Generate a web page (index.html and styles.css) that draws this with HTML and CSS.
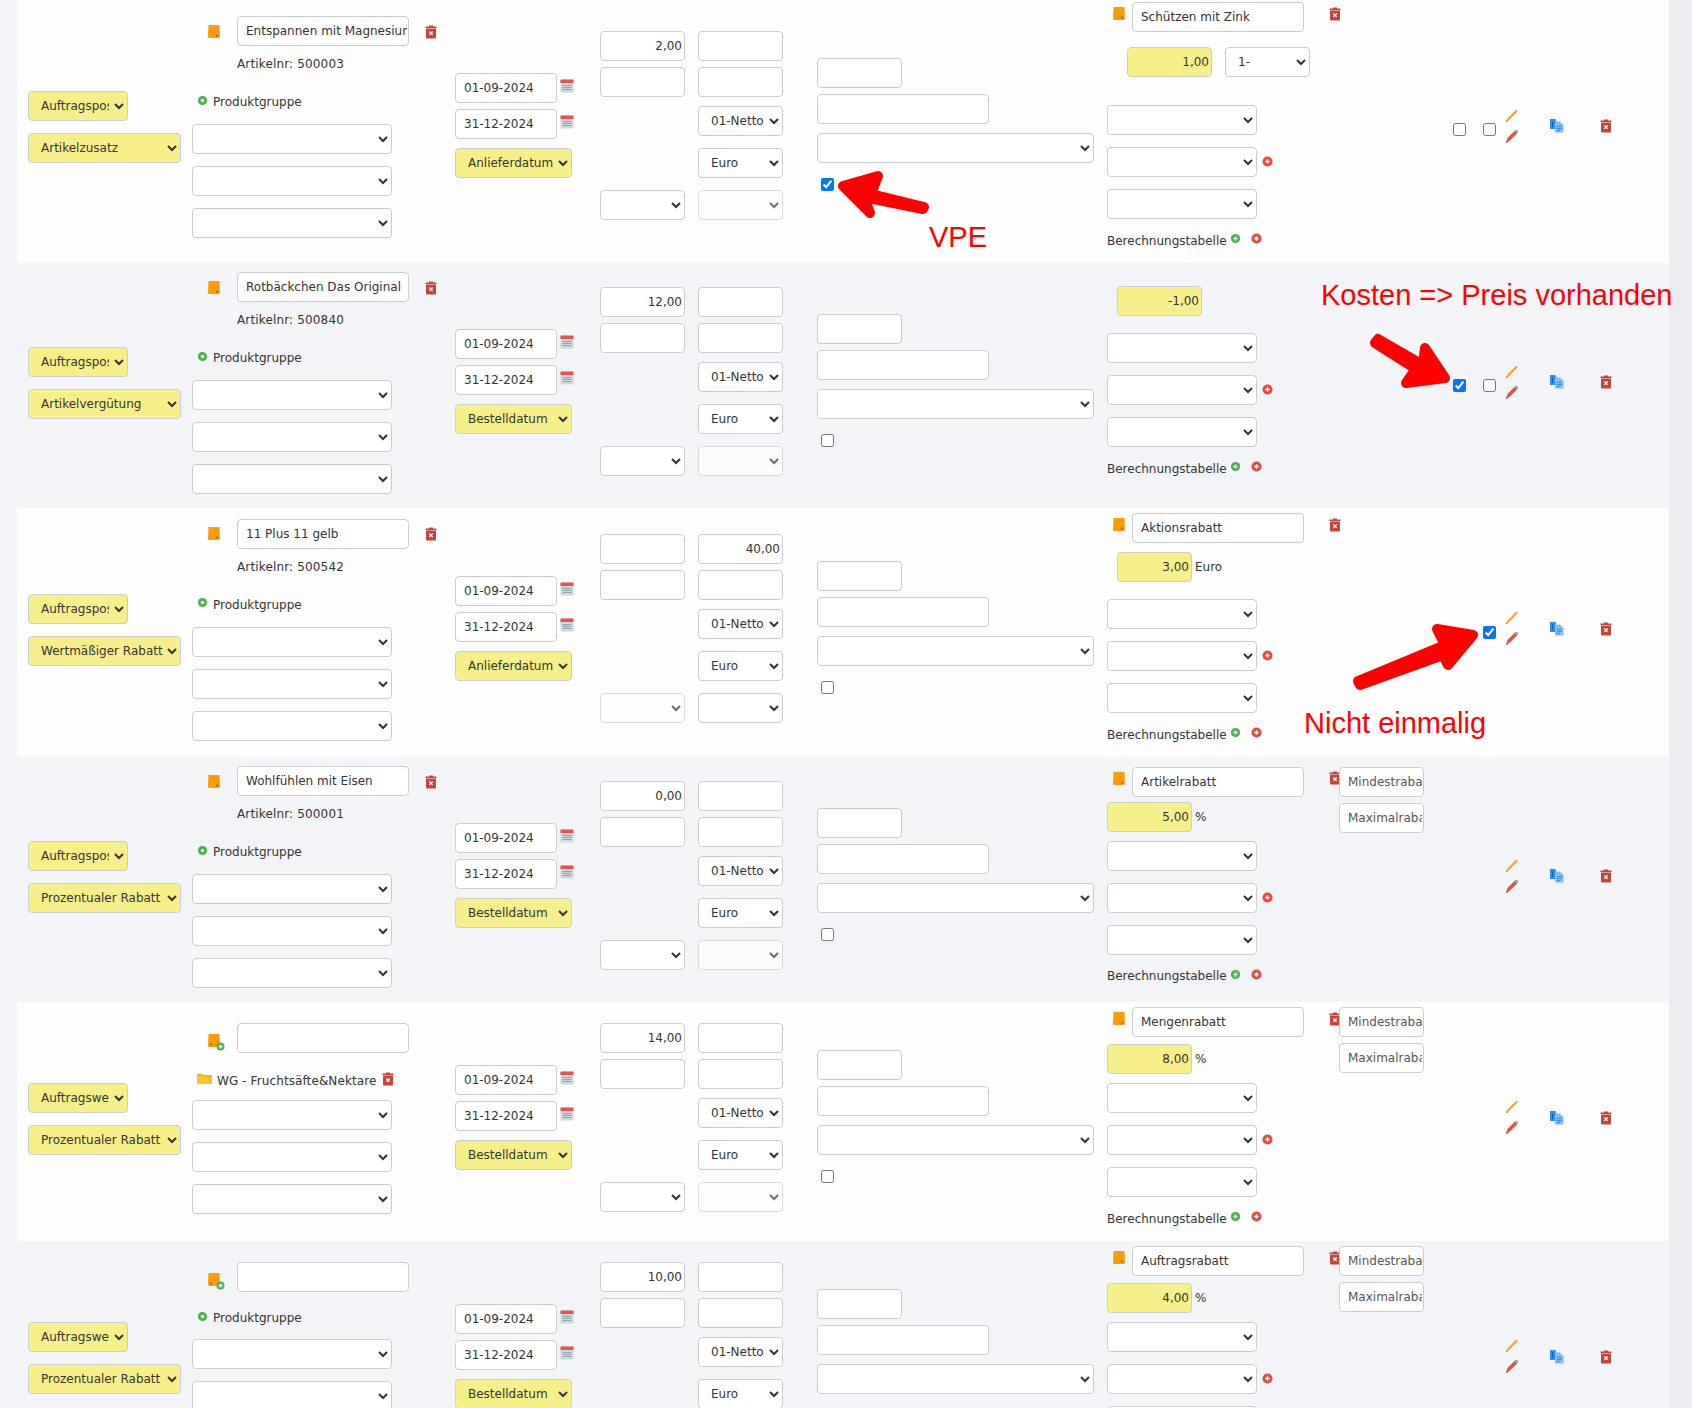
FILE: index.html
```html
<!DOCTYPE html>
<html lang="de">
<head>
    <meta charset="UTF-8">
    <title>Konditionen</title>
    <link rel="stylesheet" href="styles.css">
</head>
<body>

    <!-- Icon set -->
    <svg class="sprites" width="0" height="0">
        <symbol id="i-box" viewBox="0 0 14 15"><path d="M1.5 1h11l.5 11.5q0 1.500-1.500 1.500h-9q-1.500 0-1.500-1.500z" fill="#ff9a0a"/><rect x="9" y="10.500" width="2" height="2" fill="#a86a10"/></symbol>
        <symbol id="i-box-add" viewBox="0 0 18 18"><path d="M1.500 1h11l.5 11.500q0 1.500-1.500 1.500h-9q-1.500 0-1.500-1.500z" fill="#ff9a0a"/><rect x="3" y="10.500" width="2" height="2" fill="#a86a10"/><circle cx="13.500" cy="13.500" r="4" fill="#4caf50"/><path d="M13.500 11.500v4M11.500 13.500h4" stroke="#fff" stroke-width="1.300"/></symbol>
        <symbol id="i-trash" viewBox="0 0 12 15"><path d="M4 1.500h4v1h3.500v1.500h-11v-1.500h3.500z" fill="#c8423c"/><path d="M1 4.500h10v9q0 1-1 1h-8q-1 0-1-1z" fill="#c8423c"/><path d="M4.300 7.500l3.400 3.400M7.700 7.500l-3.400 3.400" stroke="#fff" stroke-width="1.300"/></symbol>
        <symbol id="i-cal" viewBox="0 0 14 15"><rect x=".5" y="1.500" width="13" height="13" rx="1" fill="#cfd8dc"/><path d="M.5 5v-2.500q0-1 1-1h11q1 0 1 1v2.500z" fill="#e5534b"/><path d="M2.500 7.500h9M2.500 9.500h9M2.500 11.500h9" stroke="#90a4ae"/></symbol>
        <symbol id="i-green" viewBox="0 0 12 12"><circle cx="6" cy="6" r="5" fill="#4caf50"/><circle cx="6" cy="6" r="2" fill="#dff0df"/></symbol>
        <symbol id="i-green-plus" viewBox="0 0 12 12"><circle cx="6" cy="6" r="5" fill="#4caf50"/><path d="M6 3.500v5M3.500 6h5" stroke="#dff0df" stroke-width="1.500"/></symbol>
        <symbol id="i-red-plus" viewBox="0 0 12 12"><circle cx="6" cy="6" r="5.500" fill="#e8483f"/><path d="M6 3.500v5M3.500 6h5" stroke="#fff" stroke-width="1.500"/></symbol>
        <symbol id="i-pencil" viewBox="0 0 14 15"><path d="M1 14l1.500-3.500 8.500-8.500 1.500 1.500-8.500 8.500z" fill="#ff9f1c"/><path d="M11 2l1.500 1.500" stroke="#e8a0a0" stroke-width="1.500"/><path d="M1 14l.8-2 1.200 1.200z" fill="#8a6a3a"/></symbol>
        <symbol id="i-pen-red" viewBox="0 0 14 15"><path d="M1 14l1.500-5 7-7q2-1.500 3-.5t-.5 3l-7 7z" fill="#e2533f"/><path d="M9.500 2q2-1.500 3-.5t-.5 3z" fill="#a9a9a9"/><path d="M1 14l.8-2.500 1.700 1.700z" fill="#777"/></symbol>
        <symbol id="i-copy" viewBox="0 0 14 15"><path d="M0 1h5l1 1v9h-6z" fill="#2f8df0"/><path d="M5 3.500h5l3.500 3.500v7.500h-8.500z" fill="#7cc0fb"/><path d="M7 8.500h5M7 10.500h5M7 12.500h3" stroke="#2f8df0"/><path d="M2.500 3v6" stroke="#0d5fb8"/></symbol>
        <symbol id="i-folder" viewBox="0 0 15 11"><path d="M0 1.500q0-1 1-1h4l1.500 1.500h7.500q1 0 1 1v7q0 1-1 1h-13q-1 0-1-1z" fill="#ffc12e"/><path d="M0 2.500h6.500l1 1h7.500" stroke="#f59f0a" fill="none"/></symbol>
    </svg>

    <div class="list">

        <!-- Row 1 -->
        <div class="row row-tall row-first">
            <div class="col c-type">
                <select class="yellow w-pos"><option>Auftragsposition</option></select>
                <select class="yellow w-kind"><option>Artikelzusatz</option></select>
            </div>
            <div class="col c-art">
                <div class="art-head">
                    <svg class="ic-box"><use href="#i-box"/></svg>
                    <input class="w-name" type="text" value="Entspannen mit Magnesium">
                    <svg class="ic-trash art-trash"><use href="#i-trash"/></svg>
                </div>
                <div class="art-no">Artikelnr: 500003</div>
                <div class="group"><svg class="ic-dot"><use href="#i-green"/></svg>Produktgruppe</div>
                <select class="w-group"><option></option></select>
                <select class="w-group"><option></option></select>
                <select class="w-group"><option></option></select>
            </div>
            <div class="col c-date">
                <div class="date-line"><input class="w-date" type="text" value="01-09-2024"><svg class="ic-cal"><use href="#i-cal"/></svg></div>
                <div class="date-line"><input class="w-date" type="text" value="31-12-2024"><svg class="ic-cal"><use href="#i-cal"/></svg></div>
                <select class="yellow w-when"><option>Anlieferdatum</option></select>
            </div>
            <div class="col c-num">
                <input class="w-num num" type="text" value="2,00">
                <input class="w-num num" type="text">
                <div class="num-gap"></div>
                <select class="w-num"><option></option></select>
            </div>
            <div class="col c-num2">
                <input class="w-num num" type="text">
                <input class="w-num num" type="text">
                <select class="w-num"><option>01-Netto</option></select>
                <select class="w-num"><option>Euro</option></select>
                <select class="w-num" disabled><option></option></select>
            </div>
            <div class="col c-extra">
                <input class="w-num" type="text">
                <input class="w-name" type="text">
                <select class="w-wide"><option></option></select>
                <input class="check-vpe" type="checkbox" checked>
            </div>
            <div class="col c-calc">
                <div class="calc-main">
                    <div class="calc-head">
                        <svg class="ic-box"><use href="#i-box"/></svg>
                        <input class="w-name" type="text" value="Schützen mit Zink">
                        <svg class="ic-trash calc-trash"><use href="#i-trash"/></svg>
                    </div>
                    <div class="value-line value-1 sp-15">
                        <input class="w-num num yellow" type="text" value="1,00">
                        <select class="w-num"><option>1-</option></select>
                    </div>
                    <div class="calc-selects sp-28">
                        <select class="w-calc"><option></option></select>
                        <div class="sel-add"><select class="w-calc"><option></option></select><svg class="ic-dot"><use href="#i-red-plus"/></svg></div>
                        <select class="w-calc"><option></option></select>
                    </div>
                    <div class="calc-label">Berechnungstabelle<svg class="ic-dot"><use href="#i-green-plus"/></svg><svg class="ic-dot"><use href="#i-red-plus"/></svg></div>
                </div>
            </div>
            <div class="col c-act">
                <input type="checkbox">
                <input type="checkbox">
                <div class="pens"><svg class="ic-pen"><use href="#i-pencil"/></svg><svg class="ic-pen"><use href="#i-pen-red"/></svg></div>
                <svg class="ic-copy"><use href="#i-copy"/></svg>
                <svg class="ic-trash"><use href="#i-trash"/></svg>
            </div>
        </div>

        <!-- Row 2 -->
        <div class="row alt">
            <div class="col c-type">
                <select class="yellow w-pos"><option>Auftragsposition</option></select>
                <select class="yellow w-kind"><option>Artikelvergütung</option></select>
            </div>
            <div class="col c-art">
                <div class="art-head">
                    <svg class="ic-box"><use href="#i-box"/></svg>
                    <input class="w-name" type="text" value="Rotbäckchen Das Original">
                    <svg class="ic-trash art-trash"><use href="#i-trash"/></svg>
                </div>
                <div class="art-no">Artikelnr: 500840</div>
                <div class="group"><svg class="ic-dot"><use href="#i-green"/></svg>Produktgruppe</div>
                <select class="w-group"><option></option></select>
                <select class="w-group"><option></option></select>
                <select class="w-group"><option></option></select>
            </div>
            <div class="col c-date">
                <div class="date-line"><input class="w-date" type="text" value="01-09-2024"><svg class="ic-cal"><use href="#i-cal"/></svg></div>
                <div class="date-line"><input class="w-date" type="text" value="31-12-2024"><svg class="ic-cal"><use href="#i-cal"/></svg></div>
                <select class="yellow w-when"><option>Bestelldatum</option></select>
            </div>
            <div class="col c-num">
                <input class="w-num num" type="text" value="12,00">
                <input class="w-num num" type="text">
                <div class="num-gap"></div>
                <select class="w-num"><option></option></select>
            </div>
            <div class="col c-num2">
                <input class="w-num num" type="text">
                <input class="w-num num" type="text">
                <select class="w-num"><option>01-Netto</option></select>
                <select class="w-num"><option>Euro</option></select>
                <select class="w-num" disabled><option></option></select>
            </div>
            <div class="col c-extra">
                <input class="w-num" type="text">
                <input class="w-name" type="text">
                <select class="w-wide"><option></option></select>
                <input class="check-vpe" type="checkbox">
            </div>
            <div class="col c-calc">
                <div class="calc-main">
                    <div class="value-line value-2">
                        <input class="w-num num yellow" type="text" value="-1,00">
                    </div>
                    <div class="calc-selects sp-17">
                        <select class="w-calc"><option></option></select>
                        <div class="sel-add"><select class="w-calc"><option></option></select><svg class="ic-dot"><use href="#i-red-plus"/></svg></div>
                        <select class="w-calc"><option></option></select>
                    </div>
                    <div class="calc-label">Berechnungstabelle<svg class="ic-dot"><use href="#i-green-plus"/></svg><svg class="ic-dot"><use href="#i-red-plus"/></svg></div>
                </div>
            </div>
            <div class="col c-act">
                <input type="checkbox" checked>
                <input type="checkbox">
                <div class="pens"><svg class="ic-pen"><use href="#i-pencil"/></svg><svg class="ic-pen"><use href="#i-pen-red"/></svg></div>
                <svg class="ic-copy"><use href="#i-copy"/></svg>
                <svg class="ic-trash"><use href="#i-trash"/></svg>
            </div>
        </div>

        <!-- Row 3 -->
        <div class="row row-tall">
            <div class="col c-type">
                <select class="yellow w-pos"><option>Auftragsposition</option></select>
                <select class="yellow w-kind"><option>Wertmäßiger Rabatt</option></select>
            </div>
            <div class="col c-art">
                <div class="art-head">
                    <svg class="ic-box"><use href="#i-box"/></svg>
                    <input class="w-name" type="text" value="11 Plus 11 gelb">
                    <svg class="ic-trash art-trash"><use href="#i-trash"/></svg>
                </div>
                <div class="art-no">Artikelnr: 500542</div>
                <div class="group"><svg class="ic-dot"><use href="#i-green"/></svg>Produktgruppe</div>
                <select class="w-group"><option></option></select>
                <select class="w-group"><option></option></select>
                <select class="w-group"><option></option></select>
            </div>
            <div class="col c-date">
                <div class="date-line"><input class="w-date" type="text" value="01-09-2024"><svg class="ic-cal"><use href="#i-cal"/></svg></div>
                <div class="date-line"><input class="w-date" type="text" value="31-12-2024"><svg class="ic-cal"><use href="#i-cal"/></svg></div>
                <select class="yellow w-when"><option>Anlieferdatum</option></select>
            </div>
            <div class="col c-num">
                <input class="w-num num" type="text">
                <input class="w-num num" type="text">
                <div class="num-gap"></div>
                <select class="w-num" disabled><option></option></select>
            </div>
            <div class="col c-num2">
                <input class="w-num num" type="text" value="40,00">
                <input class="w-num num" type="text">
                <select class="w-num"><option>01-Netto</option></select>
                <select class="w-num"><option>Euro</option></select>
                <select class="w-num"><option></option></select>
            </div>
            <div class="col c-extra">
                <input class="w-num" type="text">
                <input class="w-name" type="text">
                <select class="w-wide"><option></option></select>
                <input class="check-vpe" type="checkbox">
            </div>
            <div class="col c-calc">
                <div class="calc-main">
                    <div class="calc-head">
                        <svg class="ic-box"><use href="#i-box"/></svg>
                        <input class="w-name" type="text" value="Aktionsrabatt">
                        <svg class="ic-trash calc-trash"><use href="#i-trash"/></svg>
                    </div>
                    <div class="value-line value-2 sp-9">
                        <input class="w-short num yellow" type="text" value="3,00">
                        <span class="unit">Euro</span>
                    </div>
                    <div class="calc-selects sp-17">
                        <select class="w-calc"><option></option></select>
                        <div class="sel-add"><select class="w-calc"><option></option></select><svg class="ic-dot"><use href="#i-red-plus"/></svg></div>
                        <select class="w-calc"><option></option></select>
                    </div>
                    <div class="calc-label">Berechnungstabelle<svg class="ic-dot"><use href="#i-green-plus"/></svg><svg class="ic-dot"><use href="#i-red-plus"/></svg></div>
                </div>
            </div>
            <div class="col c-act">
                <div class="no-check"></div>
                <input type="checkbox" checked>
                <div class="pens"><svg class="ic-pen"><use href="#i-pencil"/></svg><svg class="ic-pen"><use href="#i-pen-red"/></svg></div>
                <svg class="ic-copy"><use href="#i-copy"/></svg>
                <svg class="ic-trash"><use href="#i-trash"/></svg>
            </div>
        </div>

        <!-- Row 4 -->
        <div class="row alt">
            <div class="col c-type">
                <select class="yellow w-pos"><option>Auftragsposition</option></select>
                <select class="yellow w-kind"><option>Prozentualer Rabatt</option></select>
            </div>
            <div class="col c-art">
                <div class="art-head">
                    <svg class="ic-box"><use href="#i-box"/></svg>
                    <input class="w-name" type="text" value="Wohlfühlen mit Eisen">
                    <svg class="ic-trash art-trash"><use href="#i-trash"/></svg>
                </div>
                <div class="art-no">Artikelnr: 500001</div>
                <div class="group"><svg class="ic-dot"><use href="#i-green"/></svg>Produktgruppe</div>
                <select class="w-group"><option></option></select>
                <select class="w-group"><option></option></select>
                <select class="w-group"><option></option></select>
            </div>
            <div class="col c-date">
                <div class="date-line"><input class="w-date" type="text" value="01-09-2024"><svg class="ic-cal"><use href="#i-cal"/></svg></div>
                <div class="date-line"><input class="w-date" type="text" value="31-12-2024"><svg class="ic-cal"><use href="#i-cal"/></svg></div>
                <select class="yellow w-when"><option>Bestelldatum</option></select>
            </div>
            <div class="col c-num">
                <input class="w-num num" type="text" value="0,00">
                <input class="w-num num" type="text">
                <div class="num-gap"></div>
                <select class="w-num"><option></option></select>
            </div>
            <div class="col c-num2">
                <input class="w-num num" type="text">
                <input class="w-num num" type="text">
                <select class="w-num"><option>01-Netto</option></select>
                <select class="w-num"><option>Euro</option></select>
                <select class="w-num" disabled><option></option></select>
            </div>
            <div class="col c-extra">
                <input class="w-num" type="text">
                <input class="w-name" type="text">
                <select class="w-wide"><option></option></select>
                <input class="check-vpe" type="checkbox">
            </div>
            <div class="col c-calc">
                <div class="calc-main">
                    <div class="calc-head">
                        <svg class="ic-box"><use href="#i-box"/></svg>
                        <input class="w-name" type="text" value="Artikelrabatt">
                        <svg class="ic-trash calc-trash"><use href="#i-trash"/></svg>
                    </div>
                    <div class="value-line sp-5">
                        <input class="w-num num yellow" type="text" value="5,00">
                        <span class="unit">%</span>
                    </div>
                    <div class="calc-selects sp-9">
                        <select class="w-calc"><option></option></select>
                        <div class="sel-add"><select class="w-calc"><option></option></select><svg class="ic-dot"><use href="#i-red-plus"/></svg></div>
                        <select class="w-calc"><option></option></select>
                    </div>
                    <div class="calc-label">Berechnungstabelle<svg class="ic-dot"><use href="#i-green-plus"/></svg><svg class="ic-dot"><use href="#i-red-plus"/></svg></div>
                </div>
                <div class="calc-aside">
                    <input class="w-num" type="text" placeholder="Mindestrabatt">
                    <input class="w-num" type="text" placeholder="Maximalrabatt">
                </div>
            </div>
            <div class="col c-act">
                <div class="no-checks"></div>
                <div class="pens"><svg class="ic-pen"><use href="#i-pencil"/></svg><svg class="ic-pen"><use href="#i-pen-red"/></svg></div>
                <svg class="ic-copy"><use href="#i-copy"/></svg>
                <svg class="ic-trash"><use href="#i-trash"/></svg>
            </div>
        </div>

        <!-- Row 5 -->
        <div class="row row-low">
            <div class="col c-type">
                <select class="yellow w-pos"><option>Auftragswert</option></select>
                <select class="yellow w-kind"><option>Prozentualer Rabatt</option></select>
            </div>
            <div class="col c-art">
                <div class="art-head">
                    <svg class="ic-box-add"><use href="#i-box-add"/></svg>
                    <input class="w-name" type="text">
                </div>
                <div class="folder-line">
                    <svg class="ic-folder"><use href="#i-folder"/></svg>WG - Fruchtsäfte&amp;Nektare<svg class="ic-trash"><use href="#i-trash"/></svg>
                </div>
                <select class="w-group"><option></option></select>
                <select class="w-group"><option></option></select>
                <select class="w-group"><option></option></select>
            </div>
            <div class="col c-date">
                <div class="date-line"><input class="w-date" type="text" value="01-09-2024"><svg class="ic-cal"><use href="#i-cal"/></svg></div>
                <div class="date-line"><input class="w-date" type="text" value="31-12-2024"><svg class="ic-cal"><use href="#i-cal"/></svg></div>
                <select class="yellow w-when"><option>Bestelldatum</option></select>
            </div>
            <div class="col c-num">
                <input class="w-num num" type="text" value="14,00">
                <input class="w-num num" type="text">
                <div class="num-gap"></div>
                <select class="w-num"><option></option></select>
            </div>
            <div class="col c-num2">
                <input class="w-num num" type="text">
                <input class="w-num num" type="text">
                <select class="w-num"><option>01-Netto</option></select>
                <select class="w-num"><option>Euro</option></select>
                <select class="w-num" disabled><option></option></select>
            </div>
            <div class="col c-extra">
                <input class="w-num" type="text">
                <input class="w-name" type="text">
                <select class="w-wide"><option></option></select>
                <input class="check-vpe" type="checkbox">
            </div>
            <div class="col c-calc">
                <div class="calc-main">
                    <div class="calc-head">
                        <svg class="ic-box"><use href="#i-box"/></svg>
                        <input class="w-name" type="text" value="Mengenrabatt">
                        <svg class="ic-trash calc-trash"><use href="#i-trash"/></svg>
                    </div>
                    <div class="value-line sp-7">
                        <input class="w-num num yellow" type="text" value="8,00">
                        <span class="unit">%</span>
                    </div>
                    <div class="calc-selects sp-9">
                        <select class="w-calc"><option></option></select>
                        <div class="sel-add"><select class="w-calc"><option></option></select><svg class="ic-dot"><use href="#i-red-plus"/></svg></div>
                        <select class="w-calc"><option></option></select>
                    </div>
                    <div class="calc-label">Berechnungstabelle<svg class="ic-dot"><use href="#i-green-plus"/></svg><svg class="ic-dot"><use href="#i-red-plus"/></svg></div>
                </div>
                <div class="calc-aside">
                    <input class="w-num" type="text" placeholder="Mindestrabatt">
                    <input class="w-num" type="text" placeholder="Maximalrabatt">
                </div>
            </div>
            <div class="col c-act">
                <div class="no-checks"></div>
                <div class="pens"><svg class="ic-pen"><use href="#i-pencil"/></svg><svg class="ic-pen"><use href="#i-pen-red"/></svg></div>
                <svg class="ic-copy"><use href="#i-copy"/></svg>
                <svg class="ic-trash"><use href="#i-trash"/></svg>
            </div>
        </div>

        <!-- Row 6 -->
        <div class="row row-low alt">
            <div class="col c-type">
                <select class="yellow w-pos"><option>Auftragswert</option></select>
                <select class="yellow w-kind"><option>Prozentualer Rabatt</option></select>
            </div>
            <div class="col c-art">
                <div class="art-head">
                    <svg class="ic-box-add"><use href="#i-box-add"/></svg>
                    <input class="w-name" type="text">
                </div>
                <div class="group group-first"><svg class="ic-dot"><use href="#i-green"/></svg>Produktgruppe</div>
                <select class="w-group"><option></option></select>
                <select class="w-group"><option></option></select>
                <select class="w-group"><option></option></select>
            </div>
            <div class="col c-date">
                <div class="date-line"><input class="w-date" type="text" value="01-09-2024"><svg class="ic-cal"><use href="#i-cal"/></svg></div>
                <div class="date-line"><input class="w-date" type="text" value="31-12-2024"><svg class="ic-cal"><use href="#i-cal"/></svg></div>
                <select class="yellow w-when"><option>Bestelldatum</option></select>
            </div>
            <div class="col c-num">
                <input class="w-num num" type="text" value="10,00">
                <input class="w-num num" type="text">
                <div class="num-gap"></div>
                <select class="w-num"><option></option></select>
            </div>
            <div class="col c-num2">
                <input class="w-num num" type="text">
                <input class="w-num num" type="text">
                <select class="w-num"><option>01-Netto</option></select>
                <select class="w-num"><option>Euro</option></select>
                <select class="w-num" disabled><option></option></select>
            </div>
            <div class="col c-extra">
                <input class="w-num" type="text">
                <input class="w-name" type="text">
                <select class="w-wide"><option></option></select>
                <input class="check-vpe" type="checkbox">
            </div>
            <div class="col c-calc">
                <div class="calc-main">
                    <div class="calc-head">
                        <svg class="ic-box"><use href="#i-box"/></svg>
                        <input class="w-name" type="text" value="Auftragsrabatt">
                        <svg class="ic-trash calc-trash"><use href="#i-trash"/></svg>
                    </div>
                    <div class="value-line sp-7">
                        <input class="w-num num yellow" type="text" value="4,00">
                        <span class="unit">%</span>
                    </div>
                    <div class="calc-selects sp-9">
                        <select class="w-calc"><option></option></select>
                        <div class="sel-add"><select class="w-calc"><option></option></select><svg class="ic-dot"><use href="#i-red-plus"/></svg></div>
                        <select class="w-calc"><option></option></select>
                    </div>
                    <div class="calc-label">Berechnungstabelle<svg class="ic-dot"><use href="#i-green-plus"/></svg><svg class="ic-dot"><use href="#i-red-plus"/></svg></div>
                </div>
                <div class="calc-aside">
                    <input class="w-num" type="text" placeholder="Mindestrabatt">
                    <input class="w-num" type="text" placeholder="Maximalrabatt">
                </div>
            </div>
            <div class="col c-act">
                <div class="no-checks"></div>
                <div class="pens"><svg class="ic-pen"><use href="#i-pencil"/></svg><svg class="ic-pen"><use href="#i-pen-red"/></svg></div>
                <svg class="ic-copy"><use href="#i-copy"/></svg>
                <svg class="ic-trash"><use href="#i-trash"/></svg>
            </div>
        </div>

    </div>

    <div class="side-band"></div>

    <!-- Red notes drawn over the screenshot -->
    <svg class="arrows" width="1692" height="1408">
        <polygon points="843,186 878,176 871,194 924,207 923,209 864,197 870,213"/>
        <polygon points="1378,339 1423,365 1425,348 1445,378 1406,383 1416,369 1375,343"/>
        <polygon points="1358,681 1445,645 1437,629 1473,635 1448,665 1443,655 1360,685"/>
    </svg>
    <div class="note note-vpe">VPE</div>
    <div class="note note-cost">Kosten =&gt; Preis vorhanden</div>
    <div class="note note-once">Nicht einmalig</div>

</body>
</html>
```

FILE: styles.css
```css
html, body {
    height: 100%;
}
body {
    margin: 0;
    height: 1408px;
    overflow: hidden;
    display: flex;
    padding-left: 17px;
    box-sizing: border-box;
    position: relative;
    background: #f3f4f8;
    color: #333;
    font-family: "DejaVu Sans", sans-serif;
    font-size: 12px;
}
.sprites {
    position: absolute;
}
.list {
    width: 1652px;
    flex: none;
    margin-top: -4px;
}
.side-band {
    flex: 1;
    background: #ebecf0;
}

/* rows */
.row {
    display: flex;
    align-items: center;
    padding: 6px 0 14px 11px;
    background: #fdfdfd;
}
.row.alt {
    background: #f3f4f8;
}
.row-tall {
    padding-top: 5px;
}
.row-first {
    padding-bottom: 13px;
}
.row-first .calc-main {
    padding: 1px 0;
}
.row-low {
    padding-top: 5px;
    padding-bottom: 14px;
}
.col {
    flex: none;
    display: flex;
    flex-direction: column;
    align-items: flex-start;
}

/* form controls */
input, select {
    box-sizing: border-box;
    height: 30px;
    flex: none;
    border: 1px solid #ccc;
    border-radius: 4px;
    background-color: #fff;
    color: #333;
    font-family: "DejaVu Sans", sans-serif;
    font-size: 12px;
}
input[type=text] {
    padding: 0 1px 0 8px;
}
input::placeholder {
    color: #555;
    opacity: 1;
}
select {
    padding-left: 8px;
}
select:disabled {
    opacity: .7;
}
input[type=checkbox] {
    width: 13px;
    height: 13px;
    margin: 0;
}
input.num {
    text-align: right;
    padding: 0 2px 0 4px;
}
.yellow {
    background-color: #f7f08a;
}
.w-pos { width: 100px; padding-right: 2px; }
.w-kind { width: 153px; margin-top: 12px; }
.w-name { width: 172px; }
.w-group { width: 200px; margin-top: 12px; }
.w-date { width: 102px; }
.w-when { width: 117px; margin-top: 9px; }
.w-num { width: 85px; }
.w-short { width: 75px; }
.w-wide { width: 277px; }
.w-calc { width: 150px; }

/* article column */
.c-type { width: 164px; padding-top: 3px; }
.c-art { width: 263px; padding-top: 3px; }
.art-head {
    display: flex;
    align-items: center;
    padding-left: 15px;
}
.art-head input {
    margin-left: 16px;
}
.ic-box {
    width: 14px;
    height: 15px;
    flex: none;
}
.ic-box-add {
    width: 18px;
    height: 18px;
    flex: none;
    margin: 8px -4px 0 0;
}
.ic-trash {
    width: 12px;
    height: 15px;
    flex: none;
}
.art-trash {
    margin-left: 16px;
}
.art-no {
    margin: 10px 0 0 45px;
    line-height: 16px;
    letter-spacing: .15px;
}
.group {
    display: flex;
    align-items: center;
    margin: 22px 0 2px 5px;
    line-height: 16px;
    height: 16px;
}
.group-first {
    margin: 18px 0 1px 5px;
}
.ic-dot {
    width: 11px;
    height: 11px;
    flex: none;
    margin: -4px 5px 0 0;
}
.folder-line {
    display: flex;
    align-items: center;
    margin: 20px 0 -1px 5px;
    height: 16px;
    letter-spacing: .1px;
}
.ic-folder {
    width: 15px;
    height: 11px;
    margin: -5px 5px 0 0;
}
.folder-line .ic-trash {
    margin: -5px 0 0 6px;
}

/* dates */
.c-date { width: 145px; }
.date-line {
    display: flex;
    align-items: center;
}
.date-line + .date-line {
    margin-top: 6px;
}
.ic-cal {
    width: 14px;
    height: 15px;
    margin: -5px 0 0 3px;
}

/* numbers */
.c-num { width: 98px; }
.c-num2 { width: 119px; }
.c-num input + input,
.c-num2 input + input { margin-top: 6px; }
.c-num2 select { margin-top: 12px; }
.c-num2 input + select { margin-top: 9px; }
.num-gap { height: 93px; }

.c-extra { width: 290px; }
.c-extra input + input { margin-top: 6px; }
.c-extra select { margin-top: 9px; }
.c-extra .check-vpe { margin: 15px 0 2px 4px; }

/* calculation column */
.c-calc {
    width: 346px;
    flex-direction: row;
}
.calc-main { width: 232px; }
.calc-head {
    display: flex;
    align-items: center;
    padding-left: 5px;
}
.calc-head input {
    margin-left: 6px;
}
.calc-head .ic-box {
    margin-top: -7px;
}
.calc-trash {
    margin: -8px 0 0 25px;
}
.value-line {
    display: flex;
    align-items: center;
}
.value-1 { padding-left: 20px; }
.value-1 select { margin-left: 13px; }
.value-2 { padding-left: 10px; }
.sp-5 { margin-top: 5px; }
.sp-7 { margin-top: 7px; }
.sp-9 { margin-top: 9px; }
.sp-15 { margin-top: 15px; }
.sp-17 { margin-top: 17px; }
.sp-28 { margin-top: 28px; }
.unit {
    margin-left: 3px;
}
.calc-selects select {
    display: block;
}
.sel-add {
    display: flex;
    align-items: center;
    margin: 12px 0;
}
.sel-add .ic-dot {
    margin: -1px 0 0 5px;
}
.calc-label {
    display: flex;
    align-items: center;
    height: 17px;
    margin-top: 13px;
}
.calc-label .ic-dot {
    margin: -4px 0 0 3px;
}
.calc-label .ic-dot + .ic-dot {
    margin-left: 10px;
}
.calc-aside {
    display: flex;
    flex-direction: column;
    gap: 6px;
}

/* actions */
.c-act {
    flex-direction: row;
    align-items: center;
}
.c-act input {
    margin-top: 8px;
}
.c-act input + input {
    margin-left: 17px;
}
.no-check {
    width: 30px;
}
.no-checks {
    width: 43px;
}
.pens {
    display: flex;
    flex-direction: column;
    gap: 6px;
    margin: 0 0 0 9px;
}
.ic-pen {
    width: 14px;
    height: 15px;
}
.ic-copy {
    width: 14px;
    height: 15px;
    margin-left: 31px;
}
.c-act .ic-trash {
    margin-left: 36px;
}

/* annotations */
.arrows {
    position: absolute;
    left: 0;
    top: 0;
    pointer-events: none;
}
.arrows polygon {
    fill: #f00;
    stroke: #f00;
    stroke-width: 10;
    stroke-linejoin: round;
}
.note {
    position: absolute;
    color: #f00;
    font-family: "Liberation Sans", sans-serif;
    font-size: 29px;
    line-height: 32px;
    white-space: nowrap;
}
.note-vpe { left: 929px; top: 221px; }
.note-cost { left: 1321px; top: 279px; }
.note-once { left: 1304px; top: 707px; }
```
